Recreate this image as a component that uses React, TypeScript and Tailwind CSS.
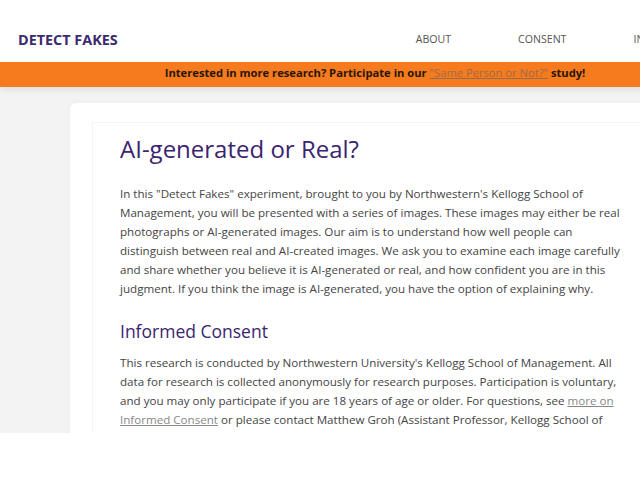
import React from "react"

export default function App() {
  return (
    <div className="w-full h-[480px] overflow-hidden bg-white font-['Open_Sans','Noto_Sans',sans-serif]">
      <div className="w-[750px]">
        {/* Header */}
        <header className="h-[62px] flex items-center px-[18px] pt-[18px] bg-white">
          <div className="text-[14.4px] font-bold text-[#3b2a6e]">DETECT FAKES</div>
          <nav className="flex items-center gap-[67px] ml-[298px] text-[10.6px] text-[#555]">
            <a>ABOUT</a>
            <a>CONSENT</a>
            <a>INSTRUCTIONS</a>
          </nav>
        </header>

        {/* Banner */}
        <div className="h-[25px] bg-[#f67a1e] flex justify-center pt-[3px] text-[11.2px] font-bold text-[#2a1606] shadow-[0_3px_6px_rgba(0,0,0,0.08)] relative">
          <span>
            Interested in more research? Participate in our{" "}
            <a className="font-normal text-[#9b6c4c] underline">"Same Person or Not?"</a> study!
          </span>
        </div>

        {/* Main */}
        <main className="h-[346px] overflow-hidden bg-[#f3f3f3] pt-[16px] pl-[70px]">
          <div className="w-[610px] h-[400px] bg-white rounded-md shadow-[0_0_4px_rgba(0,0,0,0.04)] pt-[19px] pl-[22px]">
            <div className="h-[400px] border-l border-t border-[#f4f4f4] pl-[27px] pt-[12px]">
              <h1 className="text-[24px] leading-[28px] text-[#3b2470] font-normal">AI-generated or Real?</h1>
              <p className="mt-[21px] w-[508px] text-[11.6px] leading-[19px] text-[#444]">
                In this "Detect Fakes" experiment, brought to you by Northwestern's Kellogg School of Management, you will be presented with a series of images. These images may either be real photographs or AI-generated images. Our aim is to understand how well people can distinguish between real and AI-created images. We ask you to examine each image carefully and share whether you believe it is AI-generated or real, and how confident you are in this judgment. If you think the image is AI-generated, you have the option of explaining why.
              </p>
              <h2 className="mt-[23px] text-[17.5px] leading-[21px] text-[#3b2470] font-normal">Informed Consent</h2>
              <p className="mt-[11px] w-[508px] text-[11.6px] leading-[19px] text-[#444]">
                This research is conducted by Northwestern University's Kellogg School of Management. All data for research is collected anonymously for research purposes. Participation is voluntary, and you may only participate if you are 18 years of age or older. For questions, see{" "}
                <a className="text-[#888] underline">more on Informed Consent</a> or please contact Matthew Groh (Assistant Professor, Kellogg School of Management) at matthew.groh@kellogg.northwestern.edu.
              </p>
            </div>
          </div>
        </main>
      </div>
    </div>
  )
}
